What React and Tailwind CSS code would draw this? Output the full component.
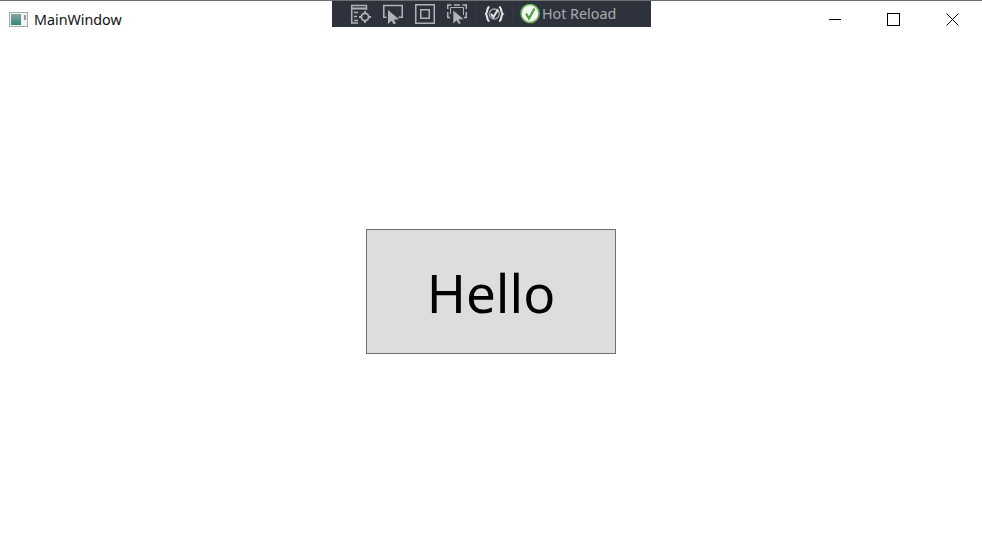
import React from "react";

const iconClass = "block shrink-0";
const gray = "#b0b2b6";
const cursor = "M5 6V20L8.5 16.8L10.8 20.5L13 19.3L10.9 15.8L16 15.2Z";

const AppIcon = () => (
  <svg width="19" height="15" viewBox="0 0 19 15" className={iconClass}>
    <rect x="0.5" y="0.5" width="18" height="14" fill="#f2f2f2" stroke="#a8a8a8" />
    <defs>
      <linearGradient id="pane" x1="0" y1="0" x2="0" y2="1">
        <stop offset="0" stopColor="#86a4aa" />
        <stop offset="1" stopColor="#2f8a6e" />
      </linearGradient>
    </defs>
    <rect x="2" y="2" width="10" height="11" fill="url(#pane)" />
    <rect x="15" y="3" width="2" height="5" fill="#9a9a9a" />
  </svg>
);

const LiveTreeIcon = () => (
  <svg width="20" height="20" viewBox="0 0 20 20" fill="none" stroke={gray} className={iconClass}>
    <path d="M15.5 6V1.5H0.75V19H7" strokeWidth="1.5" />
    <path d="M1 4.5H15" strokeWidth="2" />
    <path d="M3 8.5H7M3 12.5H6M3 16.5H7" strokeWidth="1.4" />
    <circle cx="14" cy="13" r="3.6" strokeWidth="1.8" />
    <path d="M14 7V9.5M14 16.5V19M8 13H10.5M17.5 13H20" strokeWidth="1.8" />
  </svg>
);

const SelectIcon = () => (
  <svg width="20" height="20" viewBox="0 0 20 20" fill="none" className={iconClass}>
    <path d="M3.5 13.25H0.75V1.5H19.25V13.25H15.5" stroke={gray} strokeWidth="1.6" />
    <path d={cursor} fill={gray} />
  </svg>
);

const FrameIcon = () => (
  <svg width="20" height="20" viewBox="0 0 20 20" fill="none" stroke={gray} className={iconClass}>
    <rect x="0.75" y="0.75" width="18.5" height="18.5" strokeWidth="1.5" />
    <rect x="5.75" y="5.75" width="8.5" height="8.5" strokeWidth="1.5" />
  </svg>
);

const AdornerIcon = () => (
  <svg width="20" height="20" viewBox="0 0 20 20" fill="none" className={iconClass}>
    <path d="M4.5 1H0.75V5M7 1H13M15.5 1H19.25V5M19.25 8V13.5H17M0.75 8V13.5H3" stroke={gray} strokeWidth="1.5" />
    <path d="M3.5 10V3.5H16.5V11" stroke={gray} strokeWidth="1" />
    <path d={cursor} fill={gray} stroke="#2d323c" strokeWidth="0.6" transform="translate(1 0)" />
  </svg>
);

const BindingIcon = () => (
  <svg width="20" height="20" viewBox="0 0 20 20" fill="none" stroke="#e4e5e7" className={iconClass}>
    <path d="M4.5 3C1.5 3 3 8.5 0.75 10C3 11.5 1.5 17 4.5 17" strokeWidth="2.1" />
    <path d="M14 3C17 3 15.5 8.5 17.75 10C15.5 11.5 17 17 14 17" strokeWidth="2.1" />
    <circle cx="9.25" cy="10" r="5" strokeWidth="1.3" stroke="#a9abaf" />
    <path d="M6 10L8.5 13L13 5.5" strokeWidth="2.1" />
  </svg>
);

const CheckIcon = () => (
  <svg width="20" height="20" viewBox="0 0 20 20" fill="none" className={iconClass}>
    <circle cx="10" cy="9.5" r="9" fill="#f3f7ef" stroke="#6fb35c" strokeWidth="1.5" />
    <path d="M6 9.5L9 14.5L14.5 4.5" stroke="#4f9e3f" strokeWidth="2.2" />
  </svg>
);

const App = () => {
  return (
    <div className="relative flex h-[543px] w-[982px] flex-col overflow-hidden border-t border-[#6e6e6e] bg-white font-['Noto_Sans','Open_Sans',sans-serif]">
      {/* title bar */}
      <div className="flex h-[39px] shrink-0 items-start justify-between">
        <div className="flex items-center gap-[6px] pl-[9px] pt-[10px]">
          <AppIcon />
          <span className="text-[14.3px] leading-[17px] text-[#111]">MainWindow</span>
        </div>
        <div className="flex h-[13px] items-center gap-[46px] pr-[23px] mt-[12px]">
          <div className="h-px w-[12px] bg-black" />
          <div className="h-[13px] w-[13px] border border-black" />
          <svg width="13" height="13" viewBox="0 0 13 13" stroke="#000" className={iconClass}>
            <path d="M0.5 0.5L12.5 12.5M12.5 0.5L0.5 12.5" />
          </svg>
        </div>
      </div>

      {/* debug toolbar */}
      <div className="absolute left-[332px] -top-px flex h-[27px] w-[319px] items-start bg-[#2d323c] pl-[19px] pt-[4px]">
        <LiveTreeIcon />
        <div className="ml-[12px]"><SelectIcon /></div>
        <div className="ml-[12px]"><FrameIcon /></div>
        <div className="ml-[12px]"><AdornerIcon /></div>
        <div className="ml-[9px] h-[19px] w-px bg-[#343943]" />
        <div className="ml-[8px]"><BindingIcon /></div>
        <div className="ml-[7px] h-[19px] w-px bg-[#343943]" />
        <div className="ml-[7px]"><CheckIcon /></div>
        <span className="ml-[2px] text-[14.3px] leading-[20px] text-[#a9abaf]">Hot Reload</span>
      </div>

      {/* content */}
      <div className="flex flex-1 items-center justify-center">
        <button className="flex h-[125px] w-[250px] items-center justify-center border border-[#707070] bg-[#dddddd] pt-[2px] text-[53px] leading-none text-black">
          Hello
        </button>
      </div>
    </div>
  );
};

export default App;
